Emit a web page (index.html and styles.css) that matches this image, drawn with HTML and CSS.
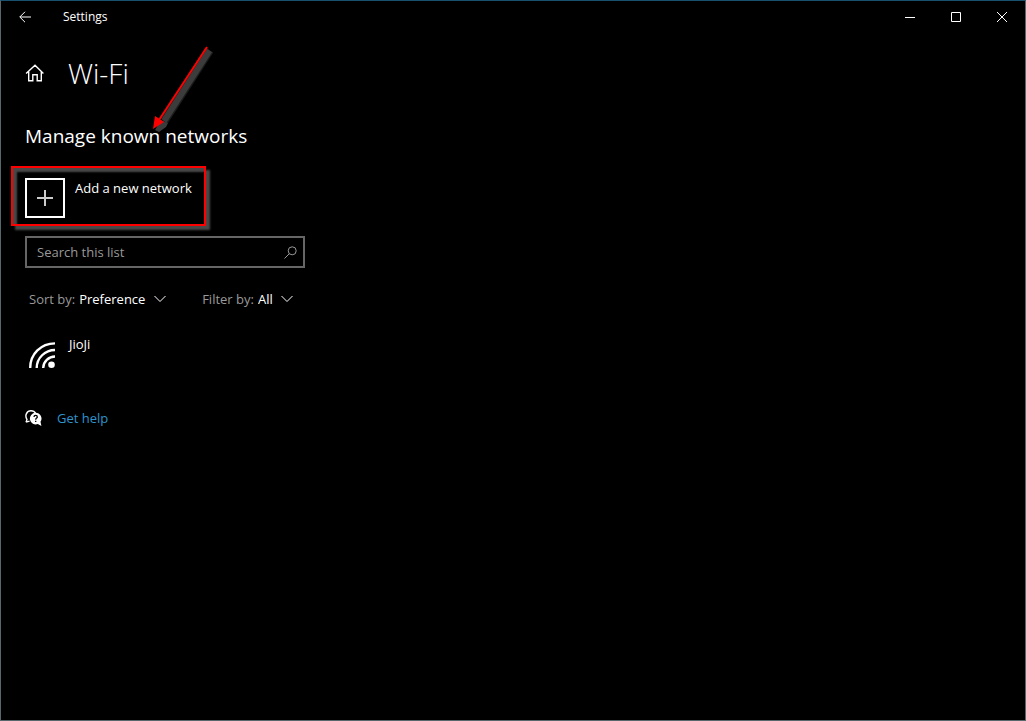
FILE: index.html
```html
<!DOCTYPE html>
<html lang="en">
<head>
  <meta charset="UTF-8">
  <title>Settings</title>
  <link rel="stylesheet" href="styles.css">
</head>
<body>
  <div class="window">
    <!-- Title bar -->
    <header class="title-bar">
      <button type="button" class="back-btn" aria-label="Back">
        <svg width="12" height="12" viewBox="0 0 12 12"><path d="M12 6H0.8M6 0.8L0.8 6L6 11.2"/></svg>
      </button>
      <span class="title-text">Settings</span>
      <div class="window-buttons">
        <button type="button" class="window-btn" aria-label="Minimize">
          <svg width="10" height="10" viewBox="0 0 10 10"><path d="M0 5.5H10"/></svg>
        </button>
        <button type="button" class="window-btn" aria-label="Maximize">
          <svg width="10" height="10" viewBox="0 0 10 10"><path d="M0.5 0.5H9.5V9.5H0.5Z"/></svg>
        </button>
        <button type="button" class="window-btn" aria-label="Close">
          <svg width="10" height="10" viewBox="0 0 10 10"><path d="M0 0L10 10M10 0L0 10"/></svg>
        </button>
      </div>
    </header>

    <main class="content">
      <div class="page-header">
        <a href="#" class="home-link" aria-label="Home">
          <svg width="19" height="18" viewBox="0 0 19 18"><path d="M1.1 9.6L10 1.2L18.4 9.6M3.7 7.8V16.8H7.8V10.7H12.2V16.8H16.3V7.8"/></svg>
        </a>
        <h1>Wi-Fi</h1>
      </div>

      <div class="section-header">
        <h2>Manage known networks</h2>
        <!-- Arrow pointing at the section -->
        <svg class="arrow" width="64" height="92" viewBox="0 0 64 92">
          <path class="arrow-shadow-edge" d="M57.5 4L12 75"/>
          <path class="arrow-shadow" d="M57.5 4.5L12 75"/>
          <path class="arrow-shadow-head" d="M3 84L9 74L16 77L14 81L7 86Z"/>
          <path class="arrow-line" d="M55 1L7 74"/>
          <path class="arrow-head" d="M1 83L3 70L12 76Z"/>
        </svg>
      </div>

      <div class="add-row">
        <button type="button" class="add-btn">
          <span class="add-icon">
            <svg width="16" height="16" viewBox="0 0 16 16"><path d="M0 8H16M8 0V16"/></svg>
          </span>
          <span class="add-text">Add a new network</span>
        </button>
        <span class="highlight"></span>
      </div>

      <div class="search-box">
        <input type="text" class="search-input" placeholder="Search this list" aria-label="Search this list">
        <svg width="13" height="13" viewBox="0 0 13 13"><circle cx="8.2" cy="4.8" r="4"/><path d="M5.3 7.7L0.5 12.5"/></svg>
      </div>

      <div class="filters">
        <div class="filter">
          <label for="sortBy">Sort by:</label>
          <select id="sortBy" class="filter-select">
            <option>Preference</option>
          </select>
          <svg width="12" height="8" viewBox="0 0 12 8"><path d="M0.5 1L6 6.5L11.5 1"/></svg>
        </div>
        <div class="filter">
          <label for="filterBy">Filter by:</label>
          <select id="filterBy" class="filter-select">
            <option>All</option>
          </select>
          <svg width="12" height="8" viewBox="0 0 12 8"><path d="M0.5 1L6 6.5L11.5 1"/></svg>
        </div>
      </div>

      <button type="button" class="network">
        <svg width="26" height="26" viewBox="0 0 26 26">
          <path d="M1.2 26C1.2 12 12 1.4 26 1.4M7.7 26C7.7 16 16 8 26 8M14.2 26C14.2 19.8 19.8 14.5 26 14.5"/>
          <circle cx="22.5" cy="22.7" r="3.3"/>
        </svg>
        <span>JioJi</span>
      </button>

      <a href="#" class="help-link">
        <svg width="17" height="17" viewBox="0 0 17 17">
          <path class="bubble-back" d="M1 12.2L2 9.6C-0.6 5.5 1.8 0.8 6 0.8C8.4 0.8 9.9 2 10.6 3.4M1 12.2L4.6 11.2"/>
          <path class="bubble-front" d="M10.6 2.8A5.8 5.8 0 0 1 15.5 11.8L16.4 16L12.8 14A5.8 5.8 0 1 1 10.6 2.8Z"/>
          <path class="bubble-mark" d="M9 6.9C9 4.9 12.3 4.9 12.3 6.9C12.3 8.2 10.7 8 10.7 9.7M10.7 10.8V12"/>
        </svg>
        <span>Get help</span>
      </a>
    </main>
  </div>
</body>
</html>
```

FILE: styles.css
```css
* {
  box-sizing: border-box;
}
body {
  margin: 0;
  background-color: #000;
  color: #fff;
  font-family: "Open Sans", "Noto Sans", sans-serif;
  font-size: 13px;
  line-height: 20px;
}
button,
input,
select {
  font: inherit;
  color: inherit;
  background: none;
  border: none;
  border-radius: 0;
  margin: 0;
  padding: 0;
}
svg {
  display: block;
  flex: none;
  fill: none;
  stroke: #fff;
}
h1,
h2 {
  margin: 0;
}
.window {
  min-height: 100vh;
  border: 1px solid #59666c;
  border-top-color: #19506f;
}

/* Title bar */
.title-bar {
  display: flex;
  align-items: center;
  height: 32px;
}
.back-btn {
  display: flex;
  align-items: center;
  justify-content: center;
  width: 48px;
  height: 32px;
}
.title-text {
  margin-left: 14px;
  font-size: 12px;
  line-height: 22px;
}
.window-buttons {
  display: flex;
  margin-left: auto;
}
.window-btn {
  display: flex;
  align-items: center;
  justify-content: center;
  width: 46px;
  height: 32px;
}

/* Page content */
.content {
  display: flex;
  flex-direction: column;
  align-items: flex-start;
  padding: 20px 24px;
}
.page-header {
  display: flex;
  align-items: center;
  gap: 24px;
  height: 40px;
}
.home-link svg {
  stroke-width: 1.4;
}
h1 {
  font-size: 28px;
  font-weight: 300;
  line-height: 38px;
}
.section-header {
  position: relative;
  margin-top: 29px;
}
h2 {
  font-size: 19px;
  font-weight: 400;
  line-height: 28px;
}
.arrow {
  position: absolute;
  left: 127px;
  top: -76px;
}
.arrow-shadow-edge {
  stroke: #1c1c1c;
  stroke-width: 9;
}
.arrow-shadow {
  stroke: #3c3c3c;
  stroke-width: 6;
}
.arrow-shadow-head {
  fill: #3c3c3c;
  stroke: none;
}
.arrow-line {
  stroke: #f00;
  stroke-width: 2;
}
.arrow-head {
  fill: #f00;
  stroke: none;
}

/* Add network */
.add-row {
  position: relative;
  margin-top: 28px;
}
.add-btn {
  display: flex;
  gap: 10px;
  text-align: left;
}
.add-icon {
  display: flex;
  align-items: center;
  justify-content: center;
  width: 40px;
  height: 40px;
  border: 2px solid #fff;
}
.add-icon svg {
  stroke: #ccc;
  stroke-width: 2;
}
.highlight {
  position: absolute;
  inset: -12px -14px -8px -14px;
  border: 2px solid #f00;
  box-shadow: 4px 4px 2px #484848, inset 4px 4px 2px #484848;
  pointer-events: none;
}

/* Search */
.search-box {
  display: flex;
  align-items: center;
  width: 280px;
  height: 32px;
  margin-top: 18px;
  padding: 0 6px 0 10px;
  border: 2px solid #666;
}
.search-input {
  flex: 1;
  min-width: 0;
  outline: none;
}
.search-input::placeholder {
  color: #999;
  opacity: 1;
}
.search-box svg {
  stroke: #999;
}

/* Sort and filter */
.filters {
  display: flex;
  gap: 36px;
  margin-top: 21px;
  padding-left: 4px;
}
.filter {
  display: flex;
  align-items: center;
}
.filter label {
  margin-right: 4px;
  color: #999;
}
.filter-select {
  appearance: none;
  margin-right: 8px;
}
.filter-select option {
  background-color: #000;
}

/* Network list */
.network {
  display: flex;
  gap: 14px;
  margin-top: 25px;
  padding-left: 4px;
}
.network svg {
  margin-top: 8px;
  stroke-width: 2.4;
}
.network circle {
  fill: #fff;
  stroke: none;
}

/* Help */
.help-link {
  display: flex;
  align-items: center;
  gap: 15px;
  margin-top: 40px;
  color: #2f93cc;
  text-decoration: none;
}
.bubble-back {
  stroke-width: 1.4;
}
.bubble-front {
  fill: #fff;
  stroke: none;
}
.bubble-mark {
  stroke: #000;
  stroke-width: 1.3;
}
```
